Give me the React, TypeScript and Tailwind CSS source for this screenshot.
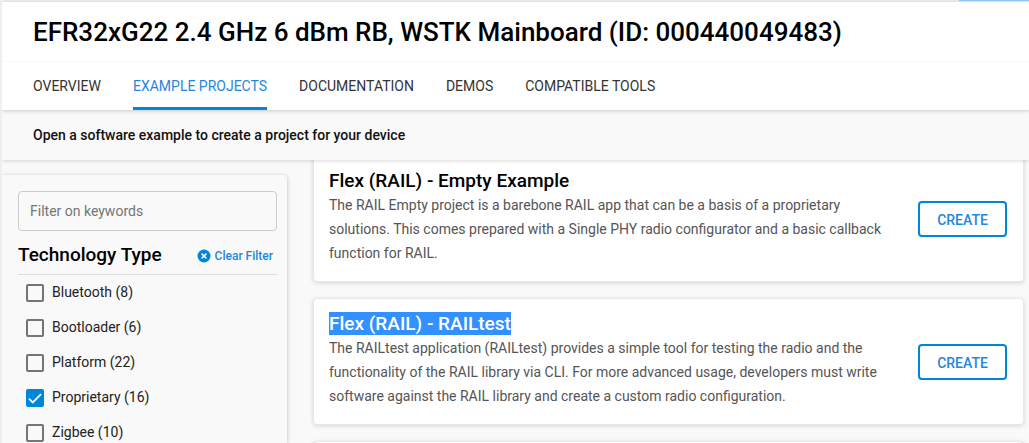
import { useState } from "react";

const TABS = ["Overview", "Example Projects", "Documentation", "Demos", "Compatible Tools"];

const TECHNOLOGIES = [
  { name: "Bluetooth", count: 8 },
  { name: "Bootloader", count: 6 },
  { name: "Platform", count: 22 },
  { name: "Proprietary", count: 16 },
  { name: "Zigbee", count: 10 },
];

const CARD =
  "shrink-0 rounded border border-[#e8e8e8] bg-white shadow-[0_1px_4px_rgba(0,0,0,0.15)]";

function TabLink({ label, active }: { label: string; active: boolean }) {
  return (
    <a
      href="#"
      aria-current={active ? "page" : undefined}
      className={
        active
          ? "flex items-center border-b-3 border-[#0086d9] pt-[3px] text-[#1f87dc]"
          : "flex items-center text-[#333]"
      }
    >
      {label}
    </a>
  );
}

function TechnologyOption({
  name,
  count,
  checked,
  onToggle,
}: {
  name: string;
  count: number;
  checked: boolean;
  onToggle: () => void;
}) {
  return (
    <label className="flex h-[35px] items-center gap-2 pl-2 text-[14px] text-[#222]">
      <span className="grid">
        <input
          type="checkbox"
          checked={checked}
          onChange={onToggle}
          className="col-start-1 row-start-1 size-[18px] appearance-none rounded-xs border-2 border-[#757575] checked:border-[#0086d9] checked:bg-[#0086d9]"
        />
        {checked && (
          <svg viewBox="0 0 18 18" className="pointer-events-none col-start-1 row-start-1 size-[18px]">
            <path d="M3 9.6 6.8 13.4 15 5.2" fill="none" stroke="white" strokeWidth="1.8" />
          </svg>
        )}
      </span>
      {name} ({count})
    </label>
  );
}

function ProjectCard({
  title,
  description,
  selected = false,
}: {
  title: string;
  description: string;
  selected?: boolean;
}) {
  return (
    <article className={`${CARD} flex items-center gap-6 pt-[13px] pr-4 pb-4 pl-[15px]`}>
      <div className="min-w-0 flex-1">
        <h2 className="text-[19px] leading-6 font-medium text-black">
          {selected ? <span className="bg-[#3390ff] text-white">{title}</span> : title}
        </h2>
        <p className="text-[14px] leading-6 text-[#555]">{description}</p>
      </div>
      <button
        type="button"
        className="mt-[3px] h-9 w-[89px] shrink-0 rounded border-2 border-[#0086d9] bg-white pt-1 text-[14px] font-medium text-[#1f87dc]"
      >
        CREATE
      </button>
    </article>
  );
}

export default function App() {
  const [checked, setChecked] = useState<string[]>(["Proprietary"]);
  const toggle = (name: string) =>
    setChecked((list) => (list.includes(name) ? list.filter((n) => n !== name) : [...list, name]));

  return (
    <div className="flex h-screen flex-col overflow-hidden border-l-2 border-[#efefef] bg-[#f9f9f9] font-[Roboto,sans-serif]">
      <div className="flex h-0.5 shrink-0 items-start justify-end bg-[#efefef]">
        <div className="h-px w-[70px] bg-[#90caf9]" />
      </div>
      <header className="relative z-20 shrink-0 bg-white shadow-[0_1px_4px_rgba(0,0,0,0.2)]">
        <h1 className="border-b border-[#f9f9f9] px-[31px] pt-0.5 text-[26px] leading-[57px] font-medium text-black">
          EFR32xG22 2.4 GHz 6 dBm RB, WSTK Mainboard (ID: 000440049483)
        </h1>
        <nav className="flex h-12 gap-8 px-[31px] text-[14px] uppercase">
          {TABS.map((tab) => (
            <TabLink key={tab} label={tab} active={tab === "Example Projects"} />
          ))}
        </nav>
      </header>
      <p className="relative z-10 shrink-0 bg-[#f9f9f9] px-[31px] text-[14px] leading-[50px] font-medium text-[#111] shadow-[0_1px_4px_rgba(0,0,0,0.15)]">
        Open a software example to create a project for your device
      </p>
      <main className="flex min-h-0 flex-1 gap-[26px] pr-[5px]">
        <aside className="mt-[15px] w-[285px] shrink-0 rounded-tr bg-[#f9f9f9] pt-4 pr-2.5 pl-4 shadow-[0_1px_4px_rgba(0,0,0,0.25)]">
          <input
            type="text"
            aria-label="Filter on keywords"
            placeholder="Filter on keywords"
            className="h-10 w-full rounded border border-[#ccc] bg-transparent px-[11px] text-[14px] placeholder:text-[#757575]"
          />
          <div className="flex h-[44px] items-center justify-between border-b border-[#ddd] pt-1.5 pr-1">
            <h2 className="text-[19px] font-medium text-black">Technology Type</h2>
            <button
              type="button"
              onClick={() => setChecked([])}
              className="flex items-center gap-1 text-[12px] font-medium text-[#1f87dc]"
            >
              <svg viewBox="0 0 14 14" className="size-[14px]">
                <circle cx="7" cy="7" r="6.5" fill="#0086d9" />
                <path d="m4.6 4.6 4.8 4.8m0-4.8L4.6 9.4" stroke="white" strokeWidth="1.5" />
              </svg>
              Clear Filter
            </button>
          </div>
          {TECHNOLOGIES.map((item) => (
            <TechnologyOption
              key={item.name}
              name={item.name}
              count={item.count}
              checked={checked.includes(item.name)}
              onToggle={() => toggle(item.name)}
            />
          ))}
        </aside>
        <section className="-mt-[5px] flex min-w-0 flex-1 flex-col gap-4">
          <ProjectCard
            title="Flex (RAIL) - Empty Example"
            description="The RAIL Empty project is a barebone RAIL app that can be a basis of a proprietary solutions. This comes prepared with a Single PHY radio configurator and a basic callback function for RAIL."
          />
          <ProjectCard
            selected
            title="Flex (RAIL) - RAILtest"
            description="The RAILtest application (RAILtest) provides a simple tool for testing the radio and the functionality of the RAIL library via CLI. For more advanced usage, developers must write software against the RAIL library and create a custom radio configuration."
          />
          <div className={`${CARD} h-32`} />
        </section>
      </main>
    </div>
  );
}
